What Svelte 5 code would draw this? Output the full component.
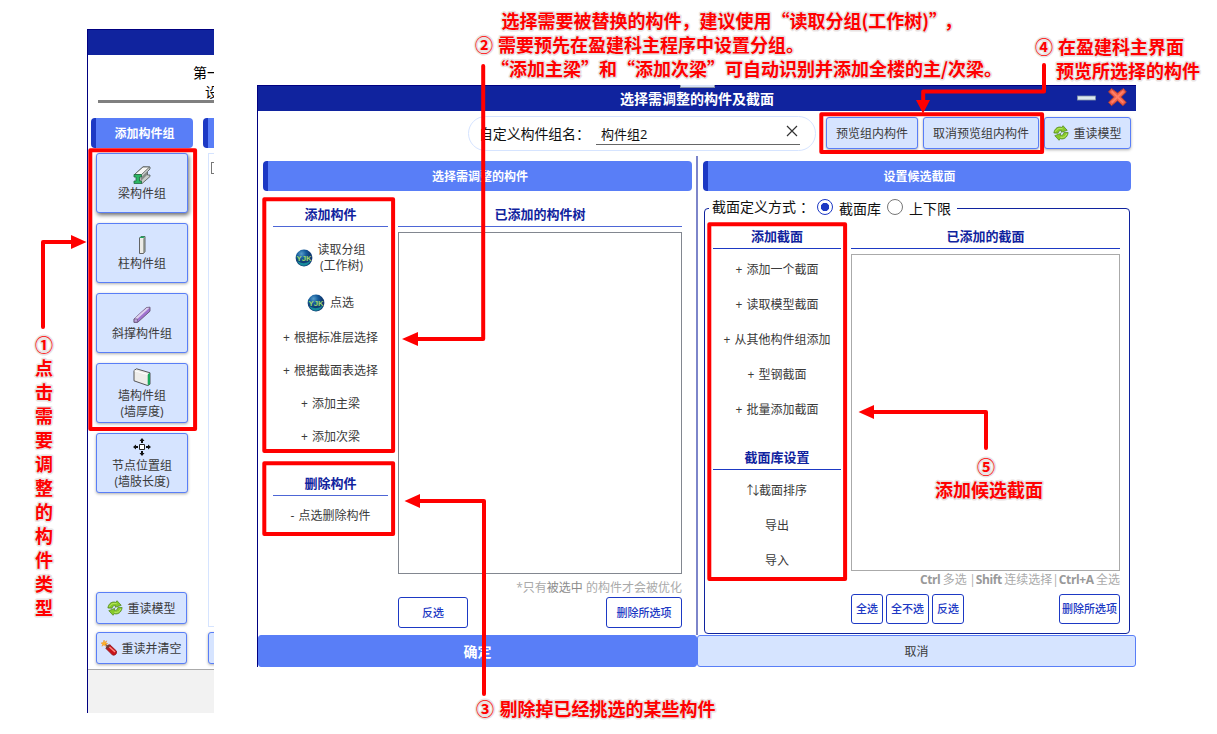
<script>
  const groups = [
    { icon: 'beam', lines: ['梁构件组'] },
    { icon: 'column', lines: ['柱构件组'] },
    { icon: 'brace', lines: ['斜撑构件组'] },
    { icon: 'wall', lines: ['墙构件组', '(墙厚度)'] },
    { icon: 'node', lines: ['节点位置组', '(墙肢长度)'] }
  ];
  const memberItems = ['根据标准层选择', '根据截面表选择', '添加主梁', '添加次梁'];
  const sectionItems = ['添加一个截面', '读取模型截面', '从其他构件组添加', '型钢截面', '批量添加截面'];
  const vertical = [...'点击需要调整的构件类型'];
  const frames = [
    [90.3, 150.3, 104.8, 278.6],
    [264.3, 199.3, 128.8, 251.8],
    [264.3, 463.3, 128.8, 70.8],
    [821.3, 114.3, 220.8, 37.8],
    [709.3, 224.2, 135.8, 354.8]
  ];
  const notes = [
    { x: 501.5, y: 28, t: '选择需要被替换的构件，建议使用“读取分组(工作树)”' },
    { x: 944, y: 28, t: '，' },
    { x: 475, y: 52, t: '②' },
    { x: 498, y: 52, t: '需要预先在盈建科主程序中设置分组。' },
    { x: 491, y: 76, t: '“添加主梁”和“添加次梁”可自动识别并添加全楼的主/次梁。' },
    { x: 1035, y: 54, t: '④' },
    { x: 1058, y: 54, t: '在盈建科主界面' },
    { x: 1056, y: 78, t: '预览所选择的构件' },
    { x: 476, y: 716, t: '③' },
    { x: 499.5, y: 716, t: '剔除掉已经挑选的某些构件' },
    { x: 977, y: 474, t: '⑤' },
    { x: 935, y: 497, t: '添加候选截面' },
    { x: 35, y: 352, t: '①' }
  ];
</script>

{#snippet icon(name)}
  <svg class="ic" width="18" height="18" viewBox="0 0 18 18" aria-hidden="true">
    {#if name === 'beam'}
      <path d="M1 9 10 .8 17 1 17 3 14.5 5.5 14.5 9 17 9 17 10.5 8.5 18 8 16 5 12Z" fill="#c9cdca" stroke="#4c5450" stroke-width=".8" />
      <path d="M1.5 8.5 10 1H16.5L8.5 8.5Z" fill="#f7f7f5" stroke="#555c58" stroke-width=".8" />
      <path d="M7.5 12 14 5.5V9L8 15Z" fill="#858b87" />
      <path d="M1 8.5H8.5V11H6.5V15H8.5V17.5H1V15H3V11H1Z" fill="#2bb765" stroke="#226a43" stroke-width=".8" />
    {:else if name === 'column'}
      <path d="M6.5 2 8 .5H12V15.5L10.5 17.5H6.5Z" fill="#ecebe7" stroke="#555" stroke-width=".9" />
      <path d="M10.3 2.5 12 1V15.5L10.3 17.5Z" fill="#858a83" />
      <path d="M6.5 2 8 .5H12L10.5 2Z" fill="#1aa65d" />
    {:else if name === 'brace'}
      <path d="M1 13 13.5 1.5 17 1.2V5.2L4.5 16.5H1Z" fill="#9f72d0" stroke="#665575" stroke-width=".9" />
      <path d="M1.5 12.5 13.8 1.8 16.5 1.8 4.3 13Z" fill="#ded1ed" />
      <path d="M1.2 13H4.4V16.2H1.2Z" fill="#c1a8e0" stroke="#6c5a80" stroke-width=".7" />
    {:else if name === 'wall'}
      <path d="M1 2.5 3.5.8 17 4.8V16.2L14.8 17.6 1 12.8Z" fill="#eeedea" stroke="#444" stroke-width=".9" />
      <path d="M14.7 6.2 17 4.8V16.2L14.7 17.4Z" fill="#1ba85b" />
      <path d="M1.5 2.8 14.5 6.5" stroke="#fff" fill="none" />
    {:else if name === 'node'}
      <path d="M6.5 6.5H11.5V11.5H6.5Z" fill="#fff" stroke="#222" />
      <path d="M9 0 11.5 3H10V5H8V3H6.5ZM9 18 6.5 15H8V13H10V15H11.5ZM0 9 3 6.5V8H5V10H3V11.5ZM18 9 15 11.5V10H13V8H15V6.5Z" fill="#111" />
    {:else if name === 'reload'}
      <g fill="#86c92a" stroke="#4c8118" stroke-width=".8" stroke-linejoin="round">
        <path d="M1 9C1.8 3.5 6 1.2 10 2.7L11.3 .8 16 6 9.2 8.2 9.7 6.3C7.6 5.9 6.3 6.8 5.7 9.2Z" />
        <path d="M17 8.5C16.4 14 12 16.8 8 15.3L6.8 17.2 2 12 8.6 9.5 8.2 11.6C10.4 12 11.7 11 12.3 8.3Z" />
      </g>
      <path d="M2.8 7.4C4.4 4 7.5 3.3 10.8 4.2M8.3 13.8C12 14.6 14.6 12.8 15.5 9.8" fill="none" stroke="#c2ec6c" stroke-width="1.1" />
    {:else if name === 'bomb'}
      <path d="M4 3.8 7 6.5" stroke="#765030" stroke-width="1.2" />
      <path d="M3.5 0 4 2.4 6.6 1 5.2 3.3 7.6 4 5 4.7 5 7.2 3.5 5.3 1 7 2 4.5 0 3.5 2.4 2.8Z" fill="#ffb426" stroke="#f28c17" stroke-width=".5" />
      <path d="M5.5 9.5 9.8 5.2 17.4 12.4C18.2 15.5 16 17.6 13 17Z" fill="#c8141b" stroke="#861116" stroke-width=".8" />
      <path d="M9.2 7.5 15.8 13.5" stroke="#ff8c83" stroke-width="1.5" />
      <ellipse cx="7.7" cy="7.4" rx="1.6" ry="2.8" transform="rotate(42 7.7 7.4)" fill="#743b35" />
    {:else if name === 'globe'}
      <defs><radialGradient id="globe" cx=".35" cy=".25"><stop offset="0" stop-color="#579dc9" /><stop offset=".55" stop-color="#155c9c" /><stop offset="1" stop-color="#103c74" /></radialGradient></defs>
      <circle cx="9" cy="9" r="8.4" fill="url(#globe)" />
      <path d="M2 12Q9 16.5 16 11.5 13 17 8 16.8 4 16 2 12Z" fill="#168b9b" />
      <text x="9" y="12" text-anchor="middle" textLength="15" lengthAdjust="spacingAndGlyphs" class="yjk">YJK</text>
    {/if}
  </svg>
{/snippet}

<main>
  <section class="window side">
    <header class="title"></header>
    <div class="steps"><div class="s1">第一步</div><div class="s2">设置</div></div>
    <div class="sidebody">
      <div class="sidecol">
        <h2 class="band">添加构件组</h2>
        <div class="groups">
          {#each groups as g, i}
            <button class="group" class:on={i === 0}>
              {@render icon(g.icon)}
              <span>{#each g.lines as l}<span class="ln">{l}</span>{/each}</span>
            </button>
          {/each}
        </div>
        <button class="act">{@render icon('reload')}<span>重读模型</span></button>
        <button class="act">{@render icon('bomb')}<span>重读并清空</span></button>
      </div>
      <div class="sidecol next">
        <h2 class="band"></h2>
        <div class="tree"><i></i></div>
        <button class="act"></button>
      </div>
    </div>
    <footer></footer>
  </section>

  <section class="window dialog">
    <header class="title">
      <span>选择需调整的构件及截面</span>
      <i class="notch"></i>
      <svg class="ctl" width="52" height="20" viewBox="0 0 52 20">
        <rect x=".5" y="9" width="18" height="4" fill="#dce9ef" stroke="#8495a8" stroke-width=".8" />
        <path d="M34.5 1.5 40.5 6 46.5 1.5 49.3 5 44.2 10 49.3 15.2 46 18.7 40.5 13.8 34.5 18.7 31.5 15.2 36.8 10 31.5 5Z" fill="#ef5f48" stroke="#a83c35" stroke-linejoin="round" />
        <path d="M34.6 4.2 46.3 15.6M46.4 4.2 34.6 15.6" stroke="#ff7f66" stroke-width="2" />
      </svg>
    </header>
    <div class="toolbar">
      <div class="pill">
        <label for="gname">自定义构件组名：</label>
        <div class="field" id="gname"><span>构件组2</span>
          <svg width="12" height="12" viewBox="0 0 12 12"><path d="M1 1 11 11M11 1 1 11" stroke="#333" stroke-width="1.2" /></svg>
        </div>
      </div>
      <button class="act w92"><span>预览组内构件</span></button>
      <button class="act w116"><span>取消预览组内构件</span></button>
      <button class="act w87">{@render icon('reload')}<span>重读模型</span></button>
    </div>

    <div class="panes">
      <div class="pane left">
        <h2 class="band">选择需调整的构件</h2>
        <div class="cols">
          <div class="menu">
            <h3>添加构件</h3>
            <div class="item tall">{@render icon('globe')}<span>读取分组<br />(工作树)</span></div>
            <div class="item pick">{@render icon('globe')}<span>点选</span></div>
            {#each memberItems as m}<div class="item"><b>+</b>{m}</div>{/each}
            <h3 class="second">删除构件</h3>
            <div class="item del"><b>-</b>点选删除构件</div>
          </div>
          <div class="content">
            <h3>已添加的构件树</h3>
            <div class="list"></div>
            <p class="hint">*只有<em>被选中</em> 的构件才会被优化</p>
            <div class="btns"><button class="out w70">反选</button><button class="out w76 end">删除所选项</button></div>
          </div>
        </div>
      </div>
      <div class="pane right">
        <h2 class="band">设置候选截面</h2>
        <div class="fieldset">
          <div class="legend">
            <span class="lg">截面定义方式<span class="colon">：</span></span><i class="radio on"></i><span class="opt">截面库</span><i class="radio"></i><span class="opt">上下限</span>
          </div>
          <div class="cols">
            <div class="menu">
              <h3>添加截面</h3>
              {#each sectionItems as m}<div class="item"><b>+</b>{m}</div>{/each}
              <h3 class="second">截面库设置</h3>
              <div class="item"><span class="arrows">↑↓</span>截面排序</div>
              <div class="item">导出</div>
              <div class="item">导入</div>
            </div>
            <div class="content">
              <h3>已添加的截面</h3>
              <div class="list"></div>
              <p class="hint keys"><strong>Ctrl</strong> 多选 |<strong>Shift</strong> 连续选择|<strong>Ctrl+A</strong> 全选</p>
              <div class="btns"><button class="out w32">全选</button><button class="out w43">全不选</button><button class="out w32">反选</button><button class="out w61 end">删除所选项</button></div>
            </div>
          </div>
        </div>
      </div>
    </div>
    <div class="bottom"><button class="ok">确定</button><button class="cancel">取消</button></div>
  </section>

  <svg class="overlay" width="1217" height="734" viewBox="0 0 1217 734">
    <g fill="none" stroke="#f00" stroke-width="4" stroke-linejoin="round" stroke-linecap="round">
      {#each frames as [x, y, w, h]}<rect {x} {y} width={w} height={h} />{/each}
      <path d="M43 327V242H73M483.2 66V339H416M484 694V501H418M1044 65V91.5H923.2V102M986 448V412H872" />
    </g>
    <path fill="#f00" d="M86.5 242 71 235V249ZM402 339 418 332V346ZM404.5 501 420 494V508ZM923 113.5 916 100H930ZM858.5 412 874 405V419Z" />
    <g class="note">
      {#each notes as n}
        <text x={n.x} y={n.y}>{n.t}</text>
      {/each}
      {#each vertical as c, i}<text x="35" y={375 + i * 23.95}>{c}</text>{/each}
    </g>
  </svg>
</main>

<style>
  :global(body) { margin: 0; background: #fff; }
  * { box-sizing: border-box; }
  main { position: relative; width: 1217px; height: 734px; overflow: hidden; font: 12px/16px "Open Sans", "Noto Sans CJK SC", sans-serif; color: #3a3a3a; }
  h2, h3, p { margin: 0; }
  button { font: inherit; color: inherit; padding: 0; margin: 0; white-space: nowrap; }
  svg { display: block; flex: none; }
  .yjk { font: bold 8px "Liberation Sans", sans-serif; fill: #9fd66b; }
  .window { position: absolute; background: #fff; border-left: 1px solid #000080; overflow: hidden; display: flex; flex-direction: column; }
  .side { left: 87px; top: 29px; width: 127px; height: 684px; }
  .dialog { left: 257px; top: 85px; width: 879px; height: 582px; }
  .title { position: relative; height: 26px; flex: none; background: #10239e; border-top: 1px solid #000080; color: #fff; font-weight: bold; font-size: 14px; display: flex; align-items: center; justify-content: center; }
  .title span { line-height: 24px; }
  .notch { position: absolute; left: 422px; top: -1px; width: 35px; height: 3px; background: #d6e0f5; border: 1px solid #8a94a8; border-top: 0; }
  .ctl { position: absolute; right: 7px; top: 1px; }
  .steps { height: 48px; margin-left: 10px; border-bottom: 3px solid #808080; color: #000; font-size: 14px; line-height: 19px; padding-top: 8px; white-space: nowrap; flex: none; }
  .s1 { padding-left: 95px; }
  .s2 { padding-left: 107px; }
  .sidebody { display: flex; gap: 10px; padding: 15px 0 0 3px; height: 566px; flex: none; }
  .sidecol { width: 102px; flex: none; display: flex; flex-direction: column; }
  .band { height: 30px; flex: none; background: #597ef7; border-left: 5px solid #1d39c4; border-radius: 4px; color: #fff; font-size: 12px; line-height: 32px; text-align: center; }
  .groups { padding: 5px 5px 0; display: flex; flex-direction: column; gap: 10px; height: 444px; flex: none; }
  .group, .act { border: 1px solid #597ef7; border-radius: 3px; background: #d6e4ff; box-shadow: 0 1px 3px rgba(0,0,0,.32); }
  .group { height: 60px; display: flex; flex-direction: column; align-items: center; justify-content: center; width: 92px; gap: 2px; padding-top: 1px; }
  .ln { display: block; }
  .group.on { box-shadow: 1px 2px 4px rgba(0,0,0,.6); }
  .act { height: 32px; display: flex; align-items: center; justify-content: center; gap: 4px; flex: none; }
  .act span { padding-top: 1px; }
  .act .ic { width: 16px; height: 16px; }
  .sidecol .act { margin: 0 0 8px 5px; width: 91px; }
  .tree { height: 474px; margin: 5px 0 5px 5px; border: 1px solid #d6e4ff; padding: 8px 2px; flex: none; }
  .tree i { display: block; width: 12px; height: 12px; border: 1px solid #777; background: linear-gradient(#555, #555) 3px 5px / 5px 1px no-repeat; }
  .side footer { flex: 1; background: #f2f2f2; border-top: 1px solid #aaa; }
  .toolbar { height: 45px; flex: none; display: flex; gap: 5px; padding: 5px 5px 0 210px; align-items: flex-start; }
  .pill { width: 348px; height: 35px; margin-right: 5px; border: 1px solid #d6e4ff; border-radius: 18px; display: flex; align-items: center; padding-left: 10px; color: #111; }
  .pill label { font-size: 14px; line-height: 34px; width: 117px; white-space: nowrap; letter-spacing: -.15px; }
  .field { width: 204px; height: 21px; border-bottom: 1px solid #666; display: flex; justify-content: space-between; align-items: center; padding: 0 2px 0 5px; font-size: 13px; margin-top: 1px; }
  .field svg { margin-top: -6px; }
  .toolbar .act { margin-top: 1px; }
  .w92 { width: 92px; } .w116 { width: 116px; } .w87 { width: 87px; }
  .panes { display: flex; height: 479px; flex: none; }
  .pane { padding-top: 5px; }
  .left { width: 440px; padding-left: 5px; border-right: 2px solid #7d85ca; }
  .left .band { width: 429px; }
  .right { padding-left: 5px; width: 438px; }
  .right .band { width: 428px; }
  .cols { display: flex; gap: 10px; }
  .left .cols { padding: 11px 10px 0; }
  .menu { width: 115px; flex: none; }
  .content { width: 284px; flex: none; }
  h3 { height: 25px; line-height: 24px; font-size: 13px; color: #10239e; text-align: center; border-bottom: 1px solid #4d66d6; }
  .item { height: 33px; display: flex; align-items: center; justify-content: center; line-height: 16px; text-align: center; white-space: nowrap; }
  .item b { font-weight: normal; margin-right: 4px; }
  .item.tall { height: 44px; margin-top: 9px; gap: 4px; }
  .item.pick { height: 46px; margin-bottom: -5px; gap: 5px; }
  .left .item:not(.tall):not(.pick) { height: 33.2px; }
  .left .second { margin-top: 17px; }
  .left .menu .item.del { height: 40px; }
  .arrows { letter-spacing: -6px; margin: 0 3px 0 -3px; }
  .list { height: 342px; margin-top: 5px; border: 1px solid #828790; }
  .hint { height: 23px; line-height: 28px; text-align: right; color: #aaa; white-space: nowrap; }
  .hint em { font-style: normal; color: #8c8c8c; }
  .keys { word-spacing: -.7px; }
  .keys strong { letter-spacing: -.4px; color: #999; }
  .btns { display: flex; gap: 3px; }
  .out { height: 31px; border: 1px solid #1d39c4; border-radius: 3px; background: #fff; color: #1d39c4; font-size: 11px; font-weight: 500; }
  .end { margin-left: auto; }
  .w70 { width: 70px; } .w76 { width: 76px; } .w32 { width: 32px; } .w43 { width: 43px; } .w61 { width: 61px; }
  .fieldset { width: 426px; height: 426px; margin: 17px 0 0 1px; border: 1px solid #10239e; border-radius: 4px; }
  .legend { height: 20px; width: 248px; margin: -12px 0 0 4px; background: #fff; display: flex; align-items: center; color: #111; font-size: 14px; line-height: 20px; padding-left: 3px; white-space: nowrap; }
  .lg { width: 105px; }
  .colon { margin-left: 4px; }
  .radio { width: 16px; height: 16px; border: 1.5px solid #777; border-radius: 50%; flex: none; }
  .radio.on { border-color: #1d39c4; background: radial-gradient(circle, #1d39c4 0 3.8px, #fff 4.5px); }
  .opt { width: 54px; padding-left: 6px; padding-top: 3px; }
  .right .cols { padding: 7px 8px 0; }
  .right .menu { width: 128px; }
  .right .content { width: 269px; }
  .right h3 { border-color: #1d39c4; }
  .right .item { height: 35px; }
  .right h3 + .item { margin-top: 3px; }
  .right .second { margin-top: 18px; }
  .right .list { height: 317px; border-color: #aaa; }
  .right .hint { height: 23px; line-height: 17px; }
  .right .out { height: 30px; }
  .bottom { display: flex; height: 32px; }
  .bottom button { border: 1px solid #597ef7; border-radius: 3px; width: 439px; padding-top: 1px; }
  .ok { background: #597ef7; color: #fff; font-size: 14px; font-weight: bold; }
  .cancel { background: #d6e4ff; }
  .overlay { position: absolute; left: 0; top: 0; pointer-events: none; }
  .note text { font: bold 18px "Noto Sans CJK SC", sans-serif; fill: #f00; stroke: #e8e3e3; stroke-width: 3px; paint-order: stroke; stroke-linejoin: round; }
</style>
